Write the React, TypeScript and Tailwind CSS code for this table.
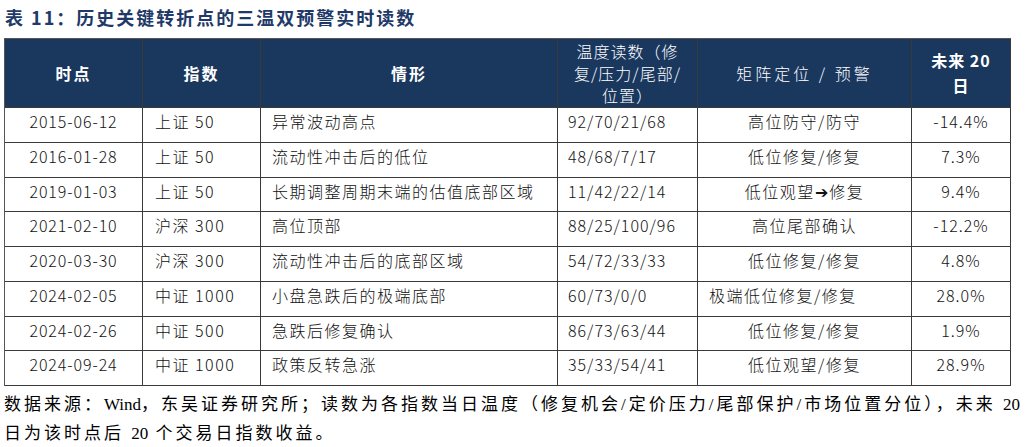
const rows = [
  { date: "2015-06-12", idx: "上证 50", desc: "异常波动高点", temp: "92/70/21/68", pos: "高位防守/防守", ret: "-14.4%" },
  { date: "2016-01-28", idx: "上证 50", desc: "流动性冲击后的低位", temp: "48/68/7/17", pos: "低位修复/修复", ret: "7.3%" },
  { date: "2019-01-03", idx: "上证 50", desc: "长期调整周期末端的估值底部区域", temp: "11/42/22/14", pos: "低位观望➔修复", ret: "9.4%" },
  { date: "2021-02-10", idx: "沪深 300", desc: "高位顶部", temp: "88/25/100/96", pos: "高位尾部确认", ret: "-12.2%" },
  { date: "2020-03-30", idx: "沪深 300", desc: "流动性冲击后的底部区域", temp: "54/72/33/33", pos: "低位修复/修复", ret: "4.8%" },
  { date: "2024-02-05", idx: "中证 1000", desc: "小盘急跌后的极端底部", temp: "60/73/0/0", pos: "极端低位修复/修复", ret: "28.0%", left: true },
  { date: "2024-02-26", idx: "中证 500", desc: "急跌后修复确认", temp: "86/73/63/44", pos: "低位修复/修复", ret: "1.9%" },
  { date: "2024-09-24", idx: "中证 1000", desc: "政策反转急涨", temp: "35/33/54/41", pos: "低位观望/修复", ret: "28.9%" },
];

const cols = "grid grid-cols-[138px_118px_297px_140px_214px_99px]";
const cell = "border-r border-b border-[#3a3a3a]";

export default function App() {
  return (
    <div
      className="w-[1025px] h-[447px] bg-white pl-[4px] pt-[5px] overflow-hidden"
      style={{ fontFamily: '"Noto Sans CJK SC", "Liberation Sans", sans-serif' }}
    >
      <div className="h-[24px] leading-[24px] pl-[1px] text-[18px] font-bold tracking-[2px] text-[#1f3a68]">
        表 11：历史关键转折点的三温双预警实时读数
      </div>

      <div className="mt-[9px] w-[1007px] border-l border-t border-[#555]">
        <div className={`${cols} h-[69px] bg-[#1a375e] text-white text-[16px]`}>
          <div className={`${cell} flex items-center justify-center font-bold tracking-[2px]`}>时点</div>
          <div className={`${cell} flex items-center justify-center font-bold tracking-[2px]`}>指数</div>
          <div className={`${cell} flex items-center justify-center font-bold tracking-[2px]`}>情形</div>
          <div className={`${cell} flex items-center justify-center text-center leading-[22px] tracking-[1px] font-light`}>
            温度读数（修<br />复/压力/尾部/<br />位置）
          </div>
          <div className={`${cell} flex items-center justify-center tracking-[3px] font-light`}>矩阵定位 / 预警</div>
          <div className={`${cell} flex items-center justify-center text-center font-bold leading-[25px] tracking-[1px]`}>
            未来 20<br />日
          </div>
        </div>

        {rows.map((r) => (
          <div key={r.date} className={`${cols} h-[34.75px] text-[16px] leading-[22px] text-[#111] font-light`}>
            <div className={`${cell} pt-[2px] text-center tracking-[0.9px]`}>{r.date}</div>
            <div className={`${cell} pt-[2px] pl-[12px] whitespace-nowrap tracking-[1.5px]`}>{r.idx}</div>
            <div className={`${cell} pt-[2px] pl-[11px] whitespace-nowrap tracking-[1.5px]`}>{r.desc}</div>
            <div className={`${cell} pt-[2px] pl-[10px] whitespace-nowrap tracking-[1px]`}>{r.temp}</div>
            <div className={`${cell} pt-[2px] whitespace-nowrap tracking-[1.5px] ${r.left ? "pl-[11px]" : "text-center"}`}>{r.pos}</div>
            <div className={`${cell} pt-[2px] text-center tracking-[1px]`}>{r.ret}</div>
          </div>
        ))}
      </div>

      <div
        className="mt-[4px] text-[17px] leading-[29px] text-black"
        style={{ fontFamily: '"Liberation Serif", "Noto Sans CJK SC", serif' }}
      >
        <div className="whitespace-nowrap tracking-[3px]">
          数据来源：<span className="tracking-normal">Wind</span>，东吴证券研究所；读数为各指数当日温度（修复机会/定价压力/尾部保护/市场位置分位），未来 <span className="tracking-normal">20</span>
        </div>
        <div className="whitespace-nowrap tracking-[3px]">
          日为该时点后 <span className="tracking-normal">20</span> 个交易日指数收益。
        </div>
      </div>
    </div>
  );
}
